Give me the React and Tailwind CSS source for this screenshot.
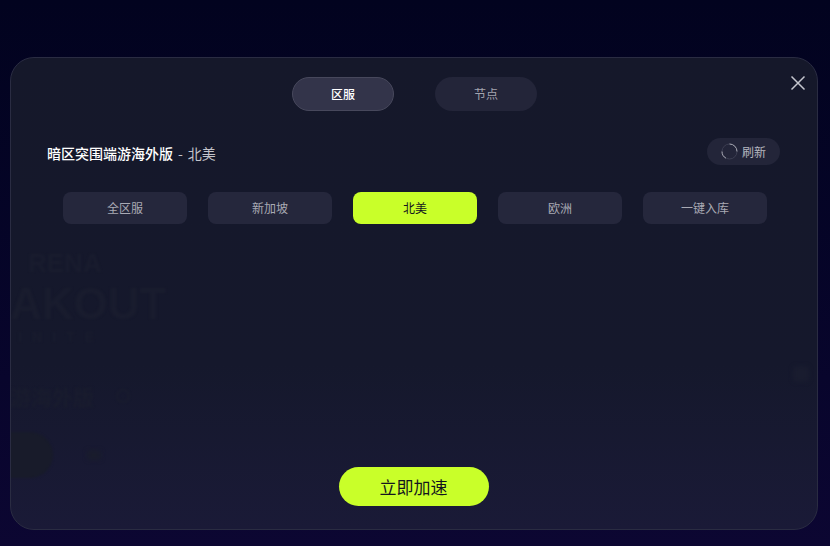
import React from "react";

const regions = ["全区服", "新加坡", "北美", "欧洲", "一键入库"];
const font = { fontFamily: '"Noto Sans CJK SC", "Noto Sans", sans-serif' };

export default function App() {
  return (
    <div
      style={font}
      className="relative h-[546px] w-[830px] overflow-hidden bg-gradient-to-b from-[#02031f] to-[#0c0632] pl-[10px] pr-[12px] pt-[57px]"
    >
      <div className="relative flex h-[473px] w-[808px] flex-col overflow-hidden rounded-[24px] border border-[#2a2c42] bg-gradient-to-b from-[#15182a] via-[#15182c] via-65% to-[#1a1a37]">
        <div aria-hidden="true" className="absolute left-[-1px] top-[190px] select-none font-['Liberation_Sans'] text-[#191c2e] blur-[1px]">
          <div className="h-[30px] pl-[18px] text-[26px] font-bold leading-[30px]">RENA</div>
          <div className="h-[51px] text-[44px] font-bold leading-[51px]">AKOUT</div>
          <div className="h-[16px] pl-[8px] text-[14px] font-bold leading-[16px] tracking-[10px]">INITE</div>
          <div className="mt-[36px] flex h-[30px] items-center gap-[22px] font-['Noto_Sans_CJK_SC'] text-[21px] font-bold leading-[30px]">
            游海外版
            <span className="h-[14px] w-[14px] rounded-full border-2 border-[#191c2e]" />
          </div>
        </div>
        <div aria-hidden="true" className="absolute left-[-40px] top-[374px] h-[46px] w-[82px] rounded-full bg-[#181b2a] blur-[1px]" />
        <div aria-hidden="true" className="absolute left-[76px] top-[392px] h-[10px] w-[14px] rounded-[2px] bg-[#191c2d] blur-[2px]" />
        <div aria-hidden="true" className="absolute right-[8px] top-[308px] h-[16px] w-[16px] rounded-[4px] bg-[#191c2f] blur-[2px]" />

        <button className="absolute right-[11px] top-[17px] text-[#c5c6ce]">
          <svg width="16" height="16" viewBox="0 0 16 16" fill="none" stroke="currentColor" strokeWidth="1.5">
            <path d="M1.5 1.5 14.5 14.5M14.5 1.5 1.5 14.5" />
          </svg>
        </button>

        <div className="relative flex flex-col">
          <div className="ml-[281px] mt-[19px] flex gap-[41px]">
            <button className="flex h-[34px] w-[102px] items-center justify-center rounded-full border border-[#47485c] bg-[#33344a] text-[12px] font-medium text-white">
              区服
            </button>
            <button className="flex h-[34px] w-[102px] items-center justify-center rounded-full bg-[#232539] text-[12px] text-[#a3a4af]">
              节点
            </button>
          </div>

          <div className="mt-[27px] flex h-[27px] items-center justify-between pl-[36px] pr-[37px]">
            <div className="flex items-center pt-[2px] text-[14px] leading-[20px]">
              <span className="font-medium text-white">暗区突围端游海外版</span>
              <span className="ml-[5px] text-[#c3c4cb]">-</span>
              <span className="ml-[5px] text-[#c3c4cb]">北美</span>
            </div>
            <button className="flex h-[27px] w-[73px] items-center gap-[4px] rounded-full bg-[#232539] pl-[14px] text-[12px] text-[#b5b6bf]">
              <svg width="17" height="17" viewBox="0 0 17 17" fill="none" strokeWidth="1">
                <circle cx="8.5" cy="8.5" r="7.5" stroke="#3c3e52" />
                <path d="M8.5 1a7.5 7.5 0 0 1 7.5 7.5M1 8.5A7.5 7.5 0 0 0 5 15.2" stroke="#a5a6b0" />
              </svg>
              刷新
            </button>
          </div>

          <div className="mt-[27px] flex gap-[21px] pl-[52px]">
            {regions.map((r) =>
              r === "北美" ? (
                <button key={r} className="flex h-[32px] w-[124px] items-center justify-center rounded-[8px] bg-[#c9ff29] text-[12px] text-[#14161f]">
                  {r}
                </button>
              ) : (
                <button key={r} className="flex h-[32px] w-[124px] items-center justify-center rounded-[8px] bg-[#25273c] text-[12px] text-[#a9aab4]">
                  {r}
                </button>
              )
            )}
          </div>
        </div>

        <div className="relative mb-[23px] mt-auto flex justify-center pr-[1px]">
          <button className="flex h-[39px] w-[150px] items-center justify-center rounded-full bg-[#c9ff29] text-[17px] text-[#14161f]">
            立即加速
          </button>
        </div>
      </div>
    </div>
  );
}
